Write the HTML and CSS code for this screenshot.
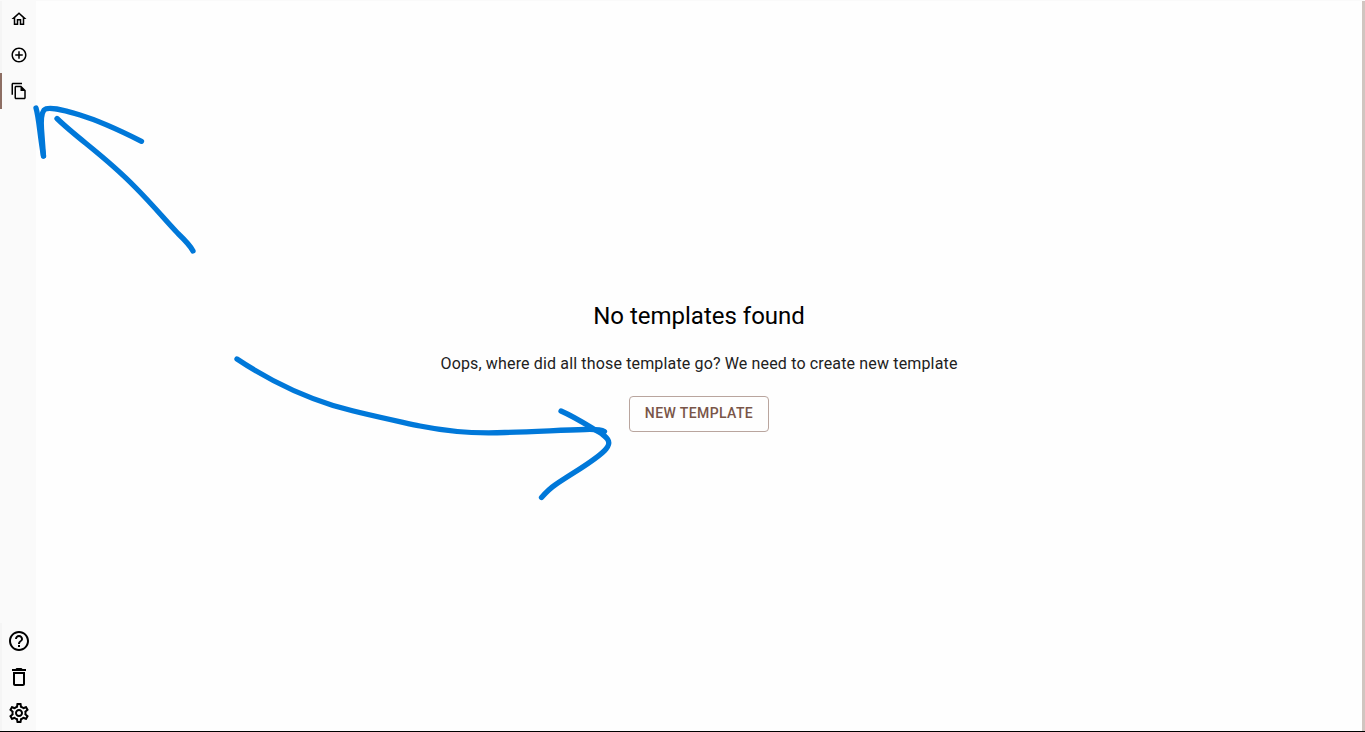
FILE: index.html
```html
<!DOCTYPE html>
<html lang="en">
<head>
<meta charset="utf-8">
<title>Templates</title>
<link rel="stylesheet" href="styles.css">
</head>
<body>
<div class="app">
  <nav class="sidebar">
    <a class="item"><svg class="icon small" viewBox="0 0 24 24"><path d="M12 5.69l5 4.5V18h-2v-6H9v6H7v-7.81l5-4.5M12 3L2 12h3v8h6v-6h2v6h6v-8h3L12 3z"/></svg></a>
    <a class="item"><svg class="icon small" viewBox="0 0 24 24"><path d="M13 7h-2v4H7v2h4v4h2v-4h4v-2h-4V7zm-1-5C6.48 2 2 6.48 2 12s4.48 10 10 10 10-4.48 10-10S17.52 2 12 2zm0 18c-4.41 0-8-3.59-8-8s3.59-8 8-8 8 3.59 8 8-3.59 8-8 8z"/></svg></a>
    <a class="item active"><svg class="icon small" viewBox="0 0 24 24"><path d="M16 1H4c-1.1 0-2 .9-2 2v14h2V3h12V1zm-1 4H8c-1.1 0-1.99.9-1.99 2L6 21c0 1.1.89 2 1.99 2H19c1.1 0 2-.9 2-2V11l-6-6zM8 21V7h6v5h5v9H8z"/></svg></a>
    <span class="spacer"></span>
    <a class="item"><svg class="icon" viewBox="0 0 24 24"><path d="M11 18h2v-2h-2v2zm1-16C6.48 2 2 6.48 2 12s4.48 10 10 10 10-4.48 10-10S17.52 2 12 2zm0 18c-4.41 0-8-3.59-8-8s3.59-8 8-8 8 3.59 8 8-3.59 8-8 8zm0-14c-2.21 0-4 1.79-4 4h2c0-1.1.9-2 2-2s2 .9 2 2c0 2-3 1.75-3 5h2c0-2.25 3-2.5 3-5 0-2.21-1.79-4-4-4z"/></svg></a>
    <a class="item"><svg class="icon" viewBox="0 0 24 24"><path d="M6 19c0 1.1.9 2 2 2h8c1.1 0 2-.9 2-2V7H6v12zM8 9h8v10H8V9zm7.5-5l-1-1h-5l-1 1H5v2h14V4h-3.5z"/></svg></a>
    <a class="item"><svg class="icon" viewBox="0 0 24 24"><path d="M19.43 12.98c.04-.32.07-.64.07-.98 0-.34-.03-.66-.07-.98l2.11-1.65c.19-.15.24-.42.12-.64l-2-3.46c-.09-.16-.26-.25-.44-.25-.06 0-.12.01-.17.03l-2.49 1c-.52-.4-1.08-.73-1.69-.98l-.38-2.65C14.46 2.18 14.25 2 14 2h-4c-.25 0-.46.18-.49.42l-.38 2.65c-.61.25-1.17.59-1.69.98l-2.49-1c-.06-.02-.12-.03-.18-.03-.17 0-.34.09-.43.25l-2 3.46c-.13.22-.07.49.12.64l2.11 1.65c-.04.32-.07.65-.07.98 0 .33.03.66.07.98l-2.11 1.65c-.19.15-.24.42-.12.64l2 3.46c.09.16.26.25.44.25.06 0 .12-.01.17-.03l2.49-1c.52.4 1.08.73 1.69.98l.38 2.65c.03.24.24.42.49.42h4c.25 0 .46-.18.49-.42l.38-2.65c.61-.25 1.17-.59 1.69-.98l2.49 1c.06.02.12.03.18.03.17 0 .34-.09.43-.25l2-3.46c.12-.22.07-.49-.12-.64l-2.11-1.65zm-1.98-1.71c.04.31.05.52.05.73 0 .21-.02.43-.05.73l-.14 1.13.89.7 1.08.84-.7 1.21-1.27-.51-1.04-.42-.9.68c-.43.32-.84.56-1.25.73l-1.06.43-.16 1.13-.2 1.35h-1.4l-.19-1.35-.16-1.13-1.06-.43c-.43-.18-.83-.41-1.23-.71l-.91-.7-1.06.43-1.27.51-.7-1.21 1.08-.84.89-.7-.14-1.13c-.03-.31-.05-.54-.05-.74s.02-.43.05-.73l.14-1.13-.89-.7-1.08-.84.7-1.21 1.27.51 1.04.42.9-.68c.43-.32.84-.56 1.25-.73l1.06-.43.16-1.13.2-1.35h1.39l.19 1.35.16 1.13 1.06.43c.43.18.83.41 1.23.71l.91.7 1.06-.43 1.27-.51.7 1.21-1.07.85-.89.7.14 1.13zM12 8c-2.21 0-4 1.79-4 4s1.79 4 4 4 4-1.79 4-4-1.79-4-4-4zm0 6c-1.1 0-2-.9-2-2s.9-2 2-2 2 .9 2 2-.9 2-2 2z"/></svg></a>
  </nav>
  <main class="content">
    <h1 class="title">No templates found</h1>
    <p class="message">Oops, where did all those template go? We need to create new template</p>
    <button class="button">NEW TEMPLATE</button>
  </main>
</div>
<svg class="ink" viewBox="0 0 1365 732">
  <path d="M141.500 141.300C119 130 100 121 80 115C62 109.500 48 106 44 110C41 114 41 121 41.500 129L43.500 156"/>
  <path d="M36 108C39 118 39.500 133 43.500 156"/>
  <path d="M57 118.500C78 139 105 156 135 187C153 205 166 221 178 233.500Q190 245 193 251"/>
  <path d="M237 359C258 373 293 393 333 405.500C358 413 388 419 420 426C450 432 474 434 505 432.500C535 432 560 430 585 429.500Q600 429 604.500 431.500"/>
  <path d="M561 411C577 418 590 427 602 434C609 439 611 443 606 449C598 459 574 472 555 485Q549 489 541.500 497.500"/>
</svg>
</body>
</html>
```
FILE: styles.css
```css
* { box-sizing: border-box; }
body {
  margin: 0;
  background: #fefefe;
  color: #000;
  font-family: Roboto, "Liberation Sans", sans-serif;
}
.app {
  display: flex;
  height: 732px;
  border-top: 1px solid #fafafa;
  border-bottom: 1px solid #000;
}
.sidebar {
  display: flex;
  flex-direction: column;
  width: 36px;
  background: #fafafa;
}
.item {
  display: flex;
  align-items: center;
  justify-content: center;
  height: 36px;
  border-left: 2px solid #f5f5f5;
}
.active { border-left-color: #8d6e63; }
.spacer { flex: 1; border-left: 2px solid #fafafa; }
.icon { display: block; width: 24px; height: 24px; fill: #000; }
.small { width: 18px; height: 18px; }
.content {
  display: flex;
  flex: 1;
  flex-direction: column;
  align-items: center;
  justify-content: center;
  border-right: 3px solid #d0c5c0;
}
.title {
  margin: 0 0 18px;
  font-size: 24px;
  font-weight: 400;
  line-height: 32px;
  letter-spacing: 0;
}
.message {
  margin: 0 0 18px;
  color: #212121;
  font-size: 16px;
  line-height: 28px;
  letter-spacing: 0.15px;
}
.button {
  height: 36px;
  padding: 0 15px 2px;
  border: 1px solid #b9a59e;
  border-radius: 4px;
  background: transparent;
  color: #795548;
  font: 500 14px/24px Roboto, "Liberation Sans", sans-serif;
  letter-spacing: 0.4px;
}
.ink {
  position: absolute;
  top: 0;
  left: 0;
  width: 1365px;
  height: 732px;
  pointer-events: none;
  fill: none;
  stroke: #0078d9;
  stroke-width: 5.300;
  stroke-linecap: round;
  stroke-linejoin: round;
}
```
